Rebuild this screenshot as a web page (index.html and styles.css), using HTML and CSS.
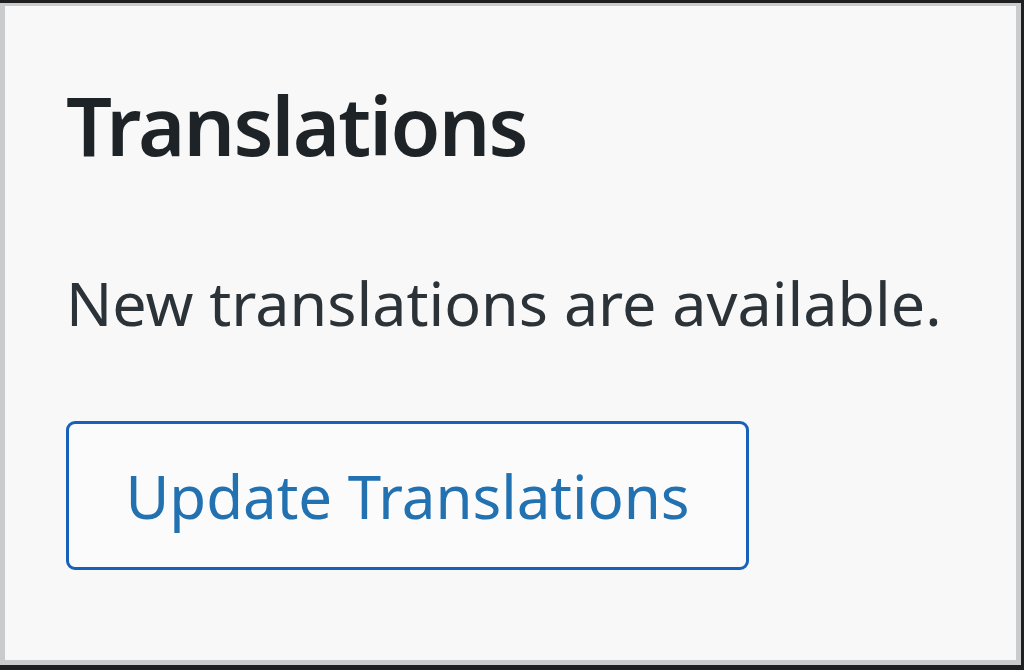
FILE: index.html
```html
<!DOCTYPE html>
<html>
<head>
<meta charset="utf-8">
<link rel="stylesheet" href="styles.css">
</head>
<body>
<div class="frame">
  <div class="panel">
    <h1 class="title">Translations</h1>
    <p class="message">New translations are available.</p>
    <button class="update-btn">Update Translations</button>
  </div>
</div>
</body>
</html>
```
FILE: styles.css
```css
html, body {
  margin: 0;
  padding: 0;
  height: 100%;
}
body {
  background: #1f1f1f;
  padding: 3px 3px 5px 0;
  box-sizing: border-box;
}
.frame {
  height: 100%;
  box-sizing: border-box;
  border: 5px solid #c9cbcc;
  border-top-width: 3px;
  background: #f8f8f8;
}
.panel {
  padding: 78px 0 0 61px;
  font-family: "Noto Sans", "Open Sans", sans-serif;
}
.title {
  margin: 0;
  font-size: 81px;
  font-weight: 600;
  color: #1d2327;
  line-height: 1;
  letter-spacing: -1.8px;
}
.message {
  margin: 107px 0 0 0;
  font-size: 61px;
  line-height: 1;
  color: #2c3338;
}
.update-btn {
  margin-top: 88px;
  width: 683px;
  height: 149px;
  border: 3px solid #1761bb;
  border-radius: 9px;
  background: #fbfbfb;
  color: #2271b1;
  font-family: "Noto Sans", "Open Sans", sans-serif;
  font-size: 60px;
  padding: 0;
}
```
